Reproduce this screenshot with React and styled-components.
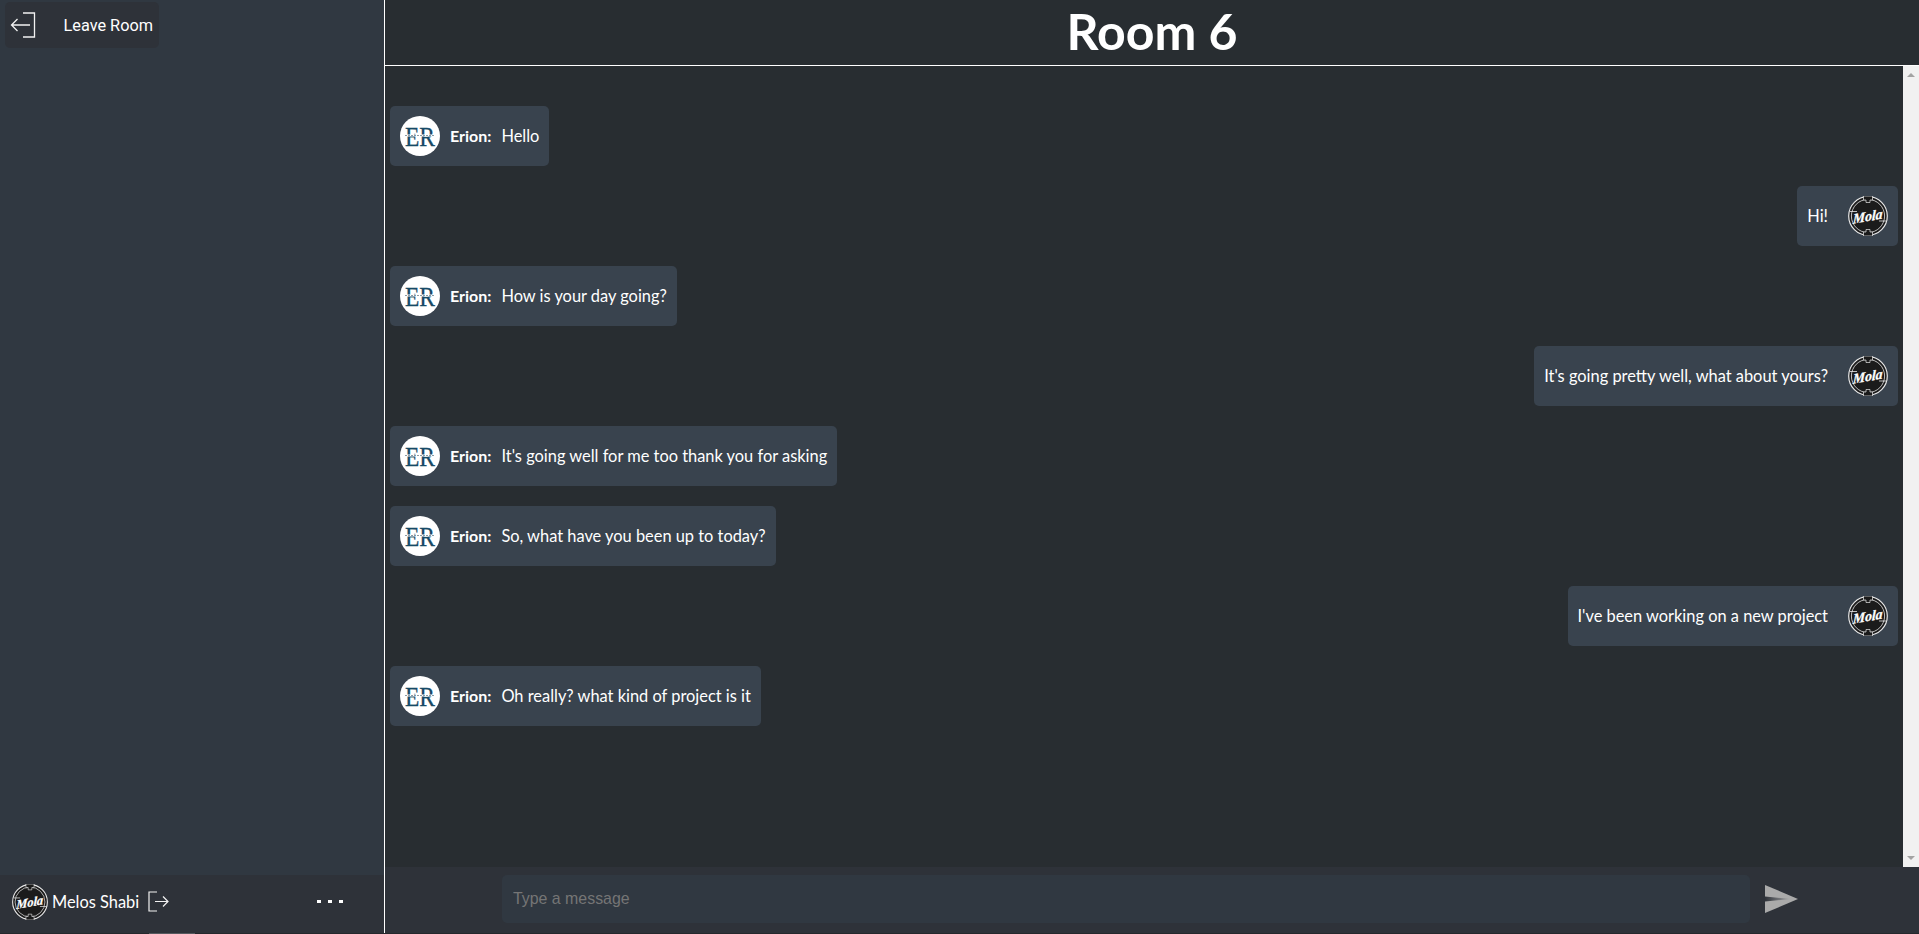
import React from 'react'
import styled, { createGlobalStyle } from 'styled-components'

const Global = createGlobalStyle`
  html, body { margin: 0; padding: 0; height: 100%; overflow: hidden; background: #282d31; }
  * { box-sizing: border-box; }
`

const Page = styled.div`
  width: 1919px;
  height: 934px;
  display: flex;
  flex-direction: column;
  background: #282d31;
  color: #fff;
  font-family: Lato, "Open Sans", sans-serif;
`

const Shell = styled.div`
  flex: 1;
  min-height: 0;
  display: flex;
`

const Sidebar = styled.aside`
  width: 385px;
  flex: none;
  display: flex;
  flex-direction: column;
  background: #303841;
  border-right: 1px solid #fff;
`

const LeaveButton = styled.button`
  display: flex;
  align-items: center;
  justify-content: space-between;
  width: 154px;
  height: 46px;
  margin: 2px 0 0 5px;
  padding: 0 6px 0 5px;
  border: 0;
  border-radius: 5px;
  background: #2e3239;
  color: #fff;
  font: 400 16.3px Roboto, sans-serif;
`

const UserBar = styled.div`
  margin-top: auto;
  height: 58px;
  display: flex;
  align-items: center;
  padding: 0 41px 5px 12px;
  background: #2e3239;
`

const UserName = styled.span`
  margin-left: 4px;
  font-size: 16.4px;
  white-space: nowrap;
`

const LogoutLink = styled.span`
  display: flex;
  margin-left: 9px;
`

const Dots = styled.div`
  display: flex;
  gap: 7px;
  margin-left: auto;
`

const Dot = styled.i`
  width: 4px;
  height: 3px;
  background: #fff;
`

const Main = styled.main`
  flex: 1;
  min-width: 0;
  display: flex;
  flex-direction: column;
`

const Header = styled.header`
  height: 66px;
  flex: none;
  display: flex;
  align-items: center;
  justify-content: center;
  border-bottom: 1px solid #fff;
`

const Title = styled.h1`
  margin: 0 0 3px;
  font-size: 50px;
  font-weight: 700;
  line-height: 1;
`

const Body = styled.div`
  flex: 1;
  min-height: 0;
  display: flex;
`

const MessageList = styled.div`
  flex: 1;
  display: flex;
  flex-direction: column;
  gap: 20px;
  padding: 40px 5px 0;
`

const Bubble = styled.div`
  align-self: ${p => (p.$mine ? 'flex-end' : 'flex-start')};
  height: 60px;
  display: flex;
  align-items: center;
  padding: 0 10px;
  border-radius: 5px;
  background: #39434e;
  font-size: 16.4px;
  white-space: nowrap;
`

const Sender = styled.strong`
  margin: 0 10px 2px;
  font-weight: 700;
  font-size: 16px;
`

const MessageText = styled.span`
  margin: 0 ${p => (p.$mine ? '20px' : '0')} 1px 0;
`

const ScrollTrack = styled.div`
  width: 16px;
  flex: none;
  display: flex;
  flex-direction: column;
  justify-content: space-between;
  align-items: center;
  padding: 7px 0;
  background: #f1f1f1;
`

const Arrow = styled.i`
  width: 0;
  height: 0;
  border-left: 4px solid transparent;
  border-right: 4px solid transparent;
  border-${p => (p.$down ? 'top' : 'bottom')}: 4px solid #a3a3a3;
`

const InputBar = styled.div`
  height: 66px;
  flex: none;
  display: flex;
  align-items: center;
  padding: 0 0 2px 117px;
  background: #2e3239;
`

const MessageInput = styled.input`
  width: 1248px;
  height: 48px;
  padding: 0 11px;
  border: 0;
  border-radius: 5px;
  background: #303841;
  color: #fff;
  font: 400 15.9px "Liberation Sans", Arial, sans-serif;
  &::placeholder { color: #757575; opacity: 1; }
`

const SendButton = styled.span`
  display: flex;
  margin-left: 15px;
`

const BottomStrip = styled.div`
  height: 1px;
  flex: none;
  padding-left: 149px;
  background: #25282c;
`

const StripThumb = styled.div`
  width: 46px;
  height: 1px;
  background: #55595e;
`

const MolaLogo = ({ size = 40 }) => (
  <svg width={size} height={size} viewBox="0 0 40 40">
    <circle cx="20" cy="20" r="19.3" fill="#1b1b1b" stroke="#e8e8e8" strokeWidth="1.2" />
    <circle cx="20" cy="20" r="16.6" fill="#1b1b1b" stroke="#e8e8e8" strokeWidth="0.8" />
    <path d="M15.5 0h9v4h-2.5v2.5h-4V4h-2.5zM15.5 40h9v-4H22v-2.5h-4V36h-2.5z" fill="#1b1b1b" stroke="#e8e8e8" strokeWidth="0.7" />
    <path d="M2 15.5h7M31 25h7" stroke="#e8e8e8" strokeWidth="0.8" />
    <text
      x="20"
      y="25"
      textAnchor="middle"
      fill="#fff"
      stroke="#fff"
      strokeWidth="0.3"
      fontFamily="'Liberation Serif', serif"
      fontStyle="italic"
      fontWeight="700"
      fontSize="14"
      transform="rotate(-10 20 20) translate(4 0) skewX(-12)"
    >
      Mola
    </text>
  </svg>
)

const ErLogo = () => (
  <svg width="40" height="40" viewBox="0 0 40 40">
    <circle cx="20" cy="20" r="20" fill="#fff" />
    <text
      x="20"
      y="30"
      textAnchor="middle"
      fill="#174a66"
      stroke="#174a66"
      strokeWidth="0.3"
      fontFamily="'Liberation Serif', serif"
      fontSize="28"
      textLength="30"
      lengthAdjust="spacingAndGlyphs"
    >
      ER
    </text>
    <path d="M4 19.5h32" stroke="#fff" strokeWidth="2" />
    <path d="M5 19.5h30" stroke="#8a9aa4" strokeWidth="1" strokeDasharray="2 1" />
  </svg>
)

const LeaveIcon = () => (
  <svg width="26" height="26" viewBox="0 0 26 26" fill="none" stroke="#f2f2f2" strokeWidth="1.3">
    <path d="M13 1h11.5v24H13" />
    <path d="M20 13H1.5M7.5 7l-6 6 6 6" />
  </svg>
)

const LogoutIcon = () => (
  <svg width="21" height="21" viewBox="0 0 21 21" fill="none" stroke="#f2f2f2" strokeWidth="1.2">
    <path d="M9 1H1v19h8" />
    <path d="M7 10.5h13M15 5.5l5 5-5 5" />
  </svg>
)

const SendIcon = () => (
  <svg width="33" height="28" viewBox="0 0 33 28">
    <defs>
      <linearGradient id="wedge" x1="0" x2="1" y1="0" y2="0">
        <stop offset="0" stopColor="#2e3239" />
        <stop offset="1" stopColor="#aaa" />
      </linearGradient>
    </defs>
    <path d="M0 0l33 14L0 28z" fill="#aaa" />
    <path d="M0 11.5L26 14 0 16.5z" fill="url(#wedge)" />
  </svg>
)

const messages = [
  { text: 'Hello' },
  { text: 'Hi!', mine: true },
  { text: 'How is your day going?' },
  { text: "It's going pretty well, what about yours?", mine: true },
  { text: "It's going well for me too thank you for asking" },
  { text: 'So, what have you been up to today?' },
  { text: "I've been working on a new project", mine: true },
  { text: 'Oh really? what kind of project is it' },
]

export default function App() {
  return (
    <Page>
      <Global />
      <Shell>
        <Sidebar>
          <LeaveButton>
            <LeaveIcon />
            Leave Room
          </LeaveButton>
          <UserBar>
            <MolaLogo size={36} />
            <UserName>Melos Shabi</UserName>
            <LogoutLink>
              <LogoutIcon />
            </LogoutLink>
            <Dots>
              <Dot />
              <Dot />
              <Dot />
            </Dots>
          </UserBar>
        </Sidebar>
        <Main>
          <Header>
            <Title>Room 6</Title>
          </Header>
          <Body>
            <MessageList>
              {messages.map((m, i) =>
                m.mine ? (
                  <Bubble key={i} $mine>
                    <MessageText $mine>{m.text}</MessageText>
                    <MolaLogo />
                  </Bubble>
                ) : (
                  <Bubble key={i}>
                    <ErLogo />
                    <Sender>Erion:</Sender>
                    <MessageText>{m.text}</MessageText>
                  </Bubble>
                )
              )}
            </MessageList>
            <ScrollTrack>
              <Arrow />
              <Arrow $down />
            </ScrollTrack>
          </Body>
          <InputBar>
            <MessageInput placeholder="Type a message" />
            <SendButton>
              <SendIcon />
            </SendButton>
          </InputBar>
        </Main>
      </Shell>
      <BottomStrip>
        <StripThumb />
      </BottomStrip>
    </Page>
  )
}
